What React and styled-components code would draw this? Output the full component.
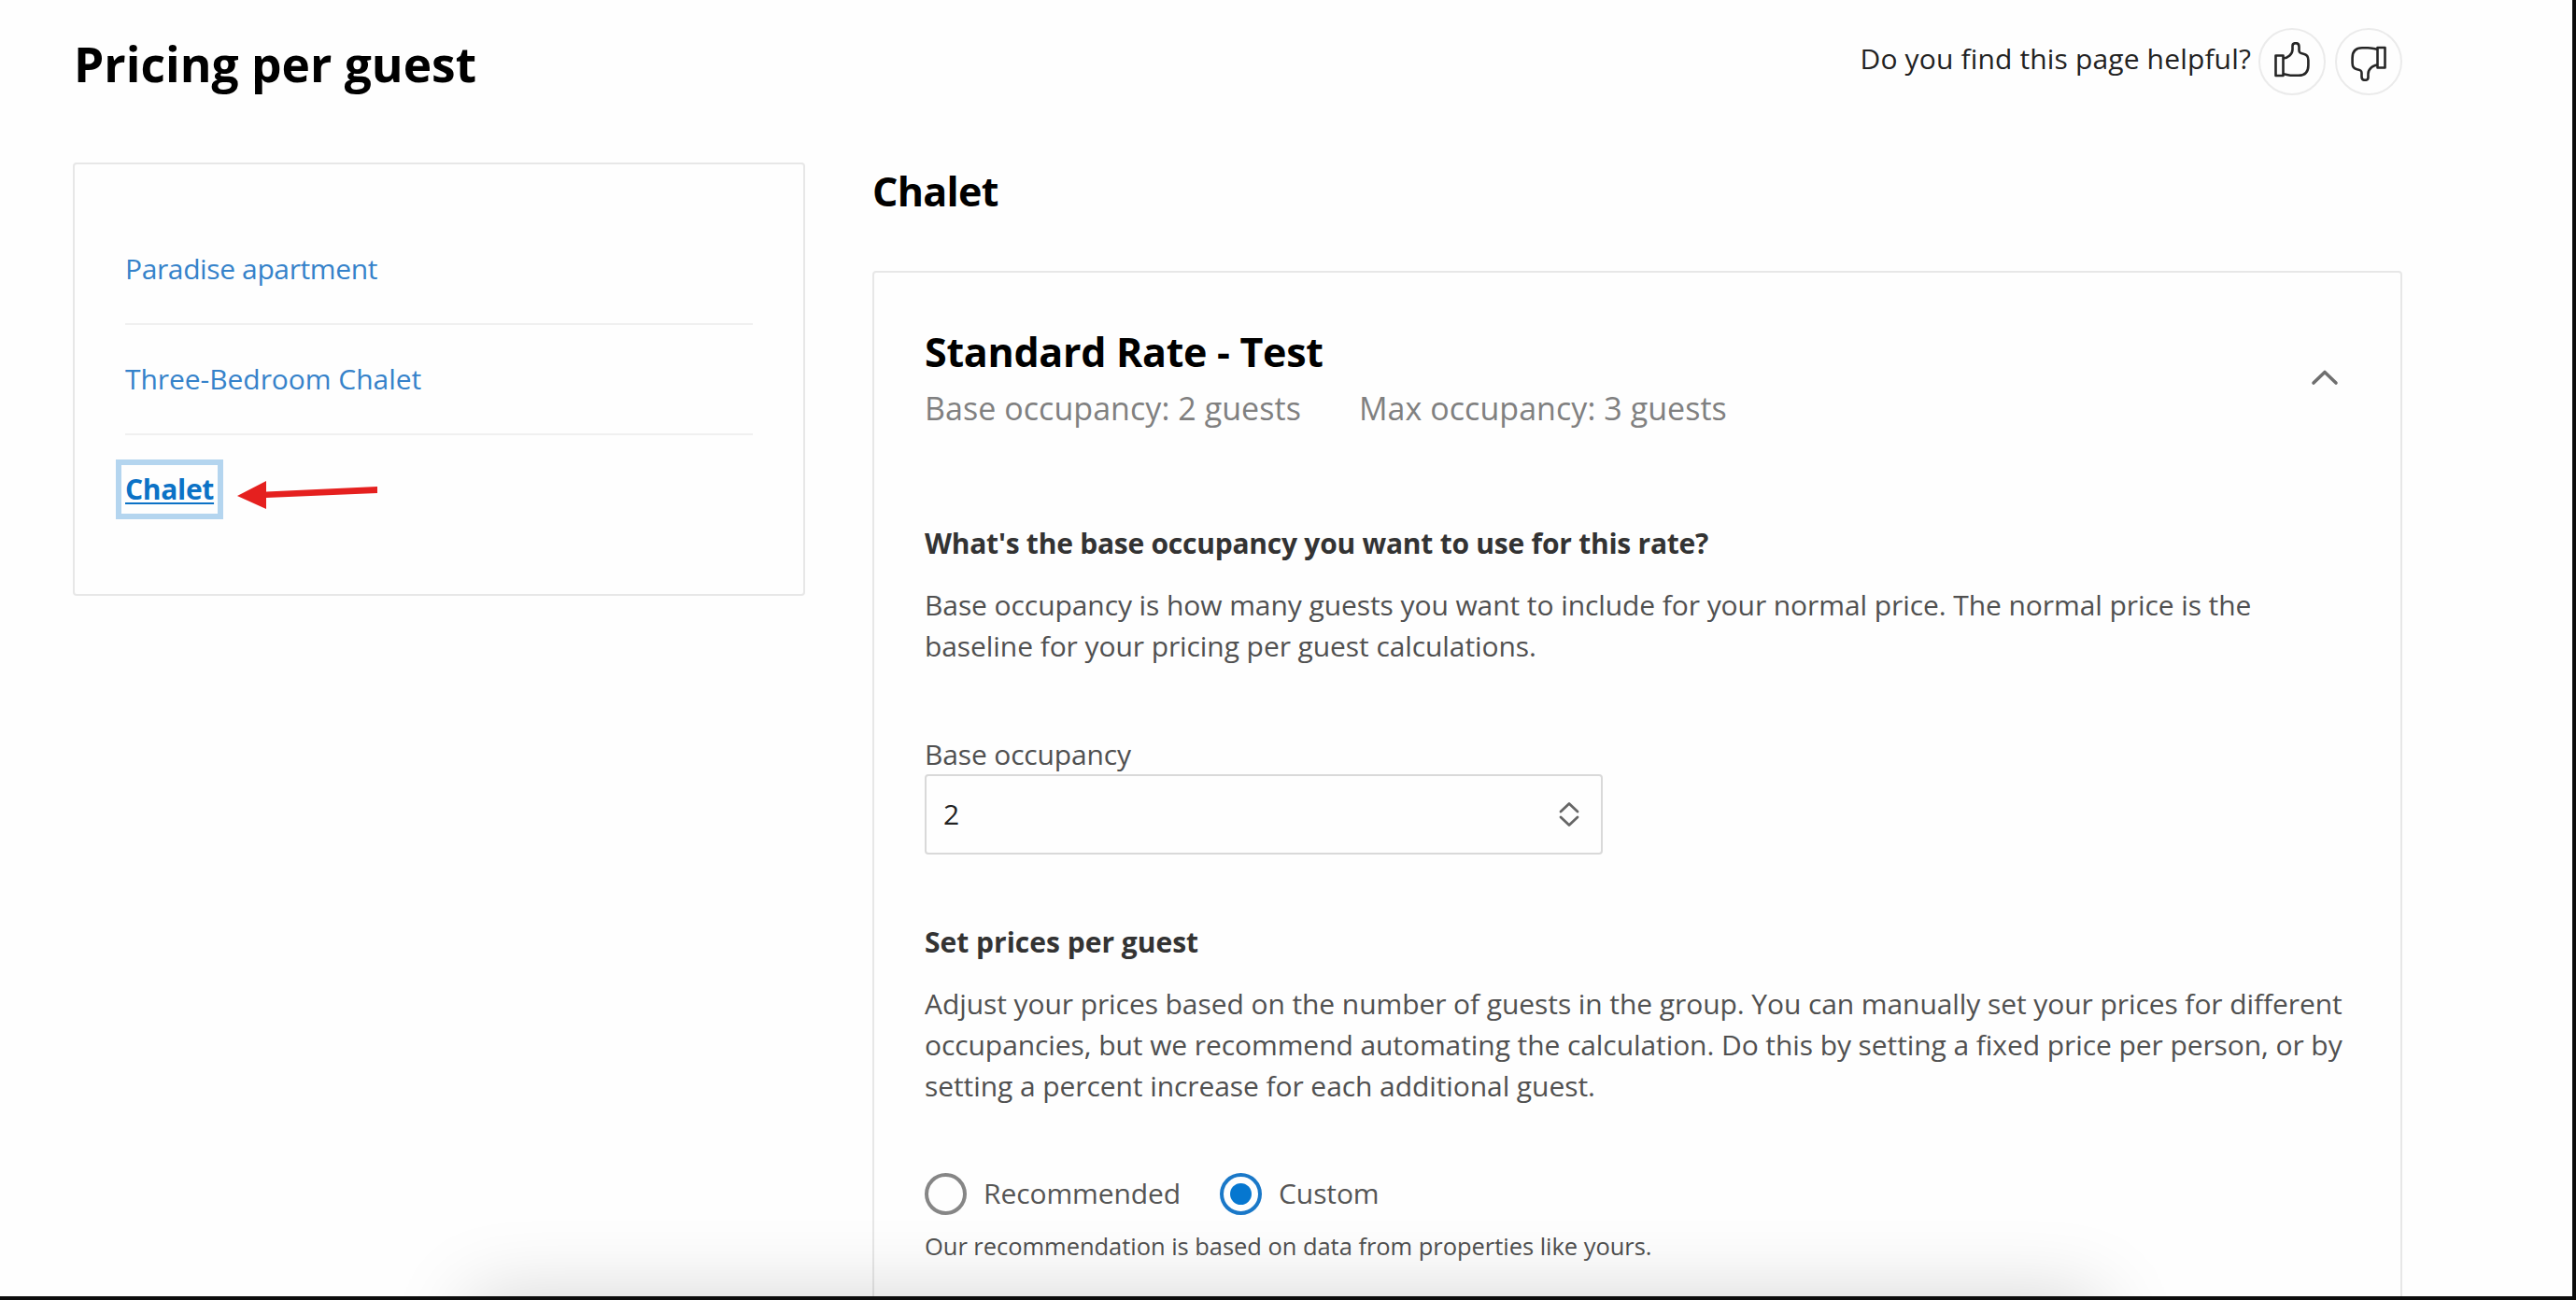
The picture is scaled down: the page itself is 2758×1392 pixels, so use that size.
import React from 'react'
import styled, { createGlobalStyle } from 'styled-components'

const GlobalStyle = createGlobalStyle`
  * {
    box-sizing: border-box;
  }

  body {
    margin: 0;
    background-color: #fefefe;
    font-family: "Open Sans", "Noto Sans", sans-serif;
    font-size: 30px;
    line-height: 44px;
    color: #505050;
  }
`

// page, with the dark edge at the right and the bottom
const Page = styled.div`
  position: relative;
  width: 2758px;
  height: 1392px;
  padding: 0 182px 0 78px;
  border-right: 4px solid #0c0c0c;
  border-bottom: 4px solid #0c0c0c;
  overflow: hidden;
`

const Header = styled.header`
  display: flex;
  justify-content: space-between;
  align-items: flex-start;
  height: 174px;
  padding-top: 30px;
`

const PageTitle = styled.h1`
  margin: 4px 0 0 1px;
  font-size: 51.5px;
  line-height: 68px;
  font-weight: 700;
  color: #000;
`

const Feedback = styled.div`
  display: flex;
  align-items: flex-start;
`

const Question = styled.span`
  margin: 11px 8px 0 0;
  letter-spacing: 0.15px;
  color: #222;
`

const RoundButton = styled.button`
  display: flex;
  justify-content: center;
  align-items: center;
  width: 72px;
  height: 72px;
  margin-left: ${(props) => props.$gap || 0}px;
  padding: ${(props) => (props.$down ? '4px 0 0' : '0 0 4px')};
  border: 2px solid #ebebeb;
  border-radius: 50%;
  background: none;
  cursor: pointer;

  svg {
    transform: ${(props) => (props.$down ? 'rotate(180deg)' : 'none')};
  }
`

const Columns = styled.main`
  display: flex;
  align-items: flex-start;
  justify-content: space-between;
`

const Sidebar = styled.nav`
  width: 784px;
  height: 464px;
  padding: 54px 54px 0 54px;
  border: 2px solid #e7e7e7;
  border-radius: 4px;
`

const RoomList = styled.ul`
  margin: 0;
  padding: 0;
  list-style: none;
`

const RoomItem = styled.li`
  display: flex;
  align-items: flex-start;
  padding: 36px 0;
  border-bottom: 2px solid #f0f0f0;

  &:last-child {
    border-bottom: none;
  }
`

const RoomLink = styled.a`
  font-weight: ${(props) => (props.$active ? 700 : 400)};
  letter-spacing: ${(props) => props.$spacing || 0}px;
  color: ${(props) => (props.$active ? '#0b72c6' : '#3582ca')};
  cursor: pointer;

  ${(props) =>
    props.$active &&
    `
    text-decoration: underline;
    text-decoration-thickness: 2px;
    text-underline-offset: 3px;
    outline: 6px solid #b4d5ef;
    outline-offset: 4px;
  `}
`

const Arrow = styled.svg`
  margin: 12px 0 0 25px;
`

const Content = styled.section`
  width: 1638px;
  padding-top: 3px;
`

const RoomName = styled.h2`
  margin: 0 0 57px;
  font-size: 43px;
  line-height: 56px;
  font-weight: 700;
  letter-spacing: -0.7px;
  color: #000;
`

const RateCard = styled.div`
  height: 1120px;
  padding: 57px 50px 0 54px;
  border: 2px solid #e7e7e7;
  border-radius: 4px;
`

const RateHeader = styled.div`
  display: flex;
  justify-content: space-between;
  align-items: flex-start;
  margin-bottom: 99px;
`

const RateName = styled.h3`
  margin: 0 0 8px;
  font-size: 43px;
  line-height: 56px;
  font-weight: 700;
  letter-spacing: -0.3px;
  color: #000;
`

const Occupancy = styled.div`
  display: flex;
  gap: 62px;
  font-size: 34px;
  line-height: 48px;
  letter-spacing: 0.05px;
  color: #808080;
`

const Chevron = styled.svg`
  margin: 46px 16px 0 0;
`

const SectionTitle = styled.h4`
  margin: 0 0 22px;
  font-size: 30px;
  font-weight: 700;
  letter-spacing: ${(props) => props.$spacing || 0}px;
  color: #333;
`

const Paragraph = styled.p`
  margin: 0 0 ${(props) => props.$bottom}px;
  letter-spacing: -0.08px;
  white-space: nowrap;
`

const Label = styled.label`
  display: block;
  letter-spacing: -0.15px;
`

const Select = styled.div`
  display: flex;
  justify-content: space-between;
  align-items: center;
  width: 726px;
  height: 86px;
  margin: -1px 0 72px;
  padding: 0 23px 0 18px;
  border: 2px solid #d9d9d9;
  border-radius: 4px;
  color: #222;
`

const RadioRow = styled.div`
  display: flex;
  align-items: center;
  height: 46px;
  margin-bottom: 13px;
`

const RadioOption = styled.label`
  display: flex;
  align-items: center;
  margin-right: 42px;
  letter-spacing: -0.1px;
  color: #555;
`

const Radio = styled.span`
  display: flex;
  justify-content: center;
  align-items: center;
  width: 45px;
  height: 45px;
  margin-right: 18px;
  border: 4px solid ${(props) => (props.$checked ? '#1a78c8' : '#868686')};
  border-radius: 50%;

  &::after {
    content: '';
    width: 23px;
    height: 23px;
    border-radius: 50%;
    background-color: ${(props) => (props.$checked ? '#0677d0' : 'transparent')};
  }
`

const Hint = styled.p`
  margin: 0;
  font-size: 25.5px;
  line-height: 40px;
  letter-spacing: -0.04px;
`

// soft shadow of the bar that sits under the bottom edge
const BottomShadow = styled.div`
  position: absolute;
  left: 504px;
  top: 1388px;
  width: 1744px;
  height: 200px;
  box-shadow: 0 0 84px rgba(0, 0, 0, 0.17);
`

const ThumbIcon = () => (
  <svg width="38" height="38" viewBox="0 0 38 38" fill="none" stroke="#262626" strokeWidth="2.6" strokeLinejoin="round">
    <path d="M1.5 14.5H9.5V36H1.5Z" />
    <path d="M9.5 17.5C14.5 17 19.5 13 19.5 8V4C19.5 1.8 20.5 1.2 23 1.2C25.5 1.2 26.5 2.2 26.5 5V9C26.5 11.5 28 12 31.5 12.8C35 13.5 36.4 16 36.4 19.5V25C36.4 32.5 33 35.8 26 35.8H20C16 35.8 13 34.6 9.5 34.2" />
  </svg>
)

const rooms = [
  { name: 'Paradise apartment', spacing: -0.38 },
  { name: 'Three-Bedroom Chalet', spacing: -0.05 },
  { name: 'Chalet', spacing: -0.3, active: true },
]

const App = () => {
  return (
    <>
      <GlobalStyle />
      <Page>
        <Header>
          <PageTitle>Pricing per guest</PageTitle>
          <Feedback>
            <Question>Do you find this page helpful?</Question>
            <RoundButton aria-label="Yes"><ThumbIcon /></RoundButton>
            <RoundButton aria-label="No" $down $gap={10}><ThumbIcon /></RoundButton>
          </Feedback>
        </Header>

        <Columns>
          <Sidebar>
            <RoomList>
              {rooms.map((room) => (
                <RoomItem key={room.name}>
                  <RoomLink $active={room.active} $spacing={room.spacing}>{room.name}</RoomLink>
                  {room.active && (
                    <Arrow width="152" height="32" viewBox="0 0 152 32">
                      <path d="M0 17L31 1V12.5L150 7V14L31 19V31Z" fill="#e5201f" />
                    </Arrow>
                  )}
                </RoomItem>
              ))}
            </RoomList>
          </Sidebar>

          <Content>
            <RoomName>Chalet</RoomName>
            <RateCard>
              <RateHeader>
                <div>
                  <RateName>Standard Rate - Test</RateName>
                  <Occupancy>
                    <span>Base occupancy: 2 guests</span>
                    <span>Max occupancy: 3 guests</span>
                  </Occupancy>
                </div>
                <Chevron width="30" height="18" viewBox="0 0 30 18" fill="none" stroke="#6f6f6f" strokeWidth="3.6" strokeLinecap="round" strokeLinejoin="round">
                  <path d="M3 15L15 3.5L27 15" />
                </Chevron>
              </RateHeader>

              <SectionTitle $spacing={-0.24}>What's the base occupancy you want to use for this rate?</SectionTitle>
              <Paragraph $bottom={72}>
                Base occupancy is how many guests you want to include for your normal price. The normal price is the<br />
                baseline for your pricing per guest calculations.
              </Paragraph>

              <Label>Base occupancy</Label>
              <Select>
                2
                <svg width="22" height="28" viewBox="0 0 22 28" fill="none" stroke="#666" strokeWidth="2.8" strokeLinecap="round" strokeLinejoin="round">
                  <path d="M2 11L11 2.5L20 11M2 17L11 25.5L20 17" />
                </svg>
              </Select>

              <SectionTitle>Set prices per guest</SectionTitle>
              <Paragraph $bottom={70}>
                Adjust your prices based on the number of guests in the group. You can manually set your prices for different<br />
                occupancies, but we recommend automating the calculation. Do this by setting a fixed price per person, or by<br />
                setting a percent increase for each additional guest.
              </Paragraph>

              <RadioRow>
                <RadioOption><Radio />Recommended</RadioOption>
                <RadioOption><Radio $checked />Custom</RadioOption>
              </RadioRow>
              <Hint>Our recommendation is based on data from properties like yours.</Hint>
            </RateCard>
          </Content>
        </Columns>

        <BottomShadow />
      </Page>
    </>
  )
}

export default App
